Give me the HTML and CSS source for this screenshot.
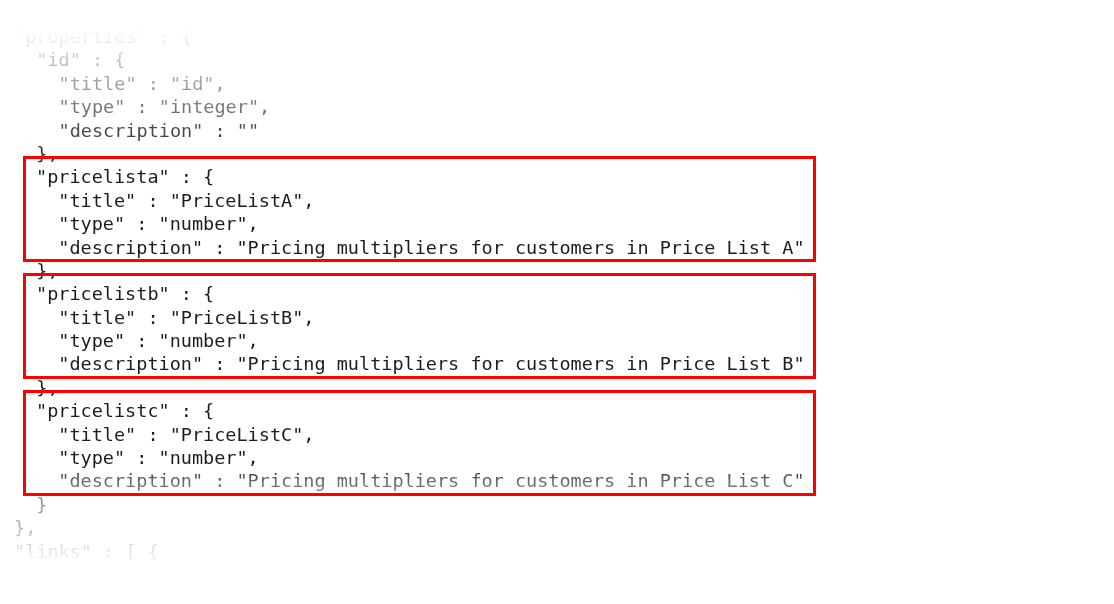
FILE: index.html
```html
<!DOCTYPE html>
<html lang="en">
<head>
<meta charset="utf-8">
<title>JSON schema</title>
<link rel="stylesheet" href="styles.css">
</head>
<body>
<div class="code">
<div class="line">"properties" : {</div>
<div class="line">  "id" : {</div>
<div class="line">    "title" : "id",</div>
<div class="line">    "type" : "integer",</div>
<div class="line">    "description" : ""</div>
<div class="line">  },</div>
<div class="box">
<div class="line">"pricelista" : {</div>
<div class="line">  "title" : "PriceListA",</div>
<div class="line">  "type" : "number",</div>
<div class="line">  "description" : "Pricing multipliers for customers in Price List A"</div>
</div>
<div class="line">  },</div>
<div class="box">
<div class="line">"pricelistb" : {</div>
<div class="line">  "title" : "PriceListB",</div>
<div class="line">  "type" : "number",</div>
<div class="line">  "description" : "Pricing multipliers for customers in Price List B"</div>
</div>
<div class="line">  },</div>
<div class="box">
<div class="line">"pricelistc" : {</div>
<div class="line">  "title" : "PriceListC",</div>
<div class="line">  "type" : "number",</div>
<div class="line">  "description" : "Pricing multipliers for customers in Price List C"</div>
</div>
<div class="line">  }</div>
<div class="line">},</div>
<div class="line">"links" : [ {</div>
</div>
</body>
</html>
```
FILE: styles.css
```css
html, body {
  margin: 0;
  padding: 0;
  background: #ffffff;
}

body {
  width: 1114px;
  height: 604px;
  overflow: hidden;
}

.code {
  padding: 25px 0 0 14px;
  height: 579px;
  font-family: "DejaVu Sans Mono", "Liberation Mono", monospace;
  font-size: 18.5px;
  line-height: 23.4px;
  color: transparent;
  background-image: linear-gradient(180deg,
    #ffffff 26px,
    #f6f6f6 36px,
    #c6c6c6 59px,
    #a2a2a2 83px,
    #7a7a7a 106px,
    #4a4a4a 130px,
    #2a2a2a 153px,
    #1b1b20 170px,
    #1b1b20 464px,
    #6c6c6c 482px,
    #949494 504px,
    #b6b6b6 528px,
    #e4e4e4 551px,
    #ffffff 568px);
  -webkit-background-clip: text;
  background-clip: text;
}

.line {
  height: 23.4px;
  white-space: pre;
}

.box {
  width: 787px;
  box-sizing: border-box;
  margin: -6.5px 0 0 12px;
  padding: 6.5px 0 0 10px;
  outline: 3.4px solid #ff0000;
}
```
